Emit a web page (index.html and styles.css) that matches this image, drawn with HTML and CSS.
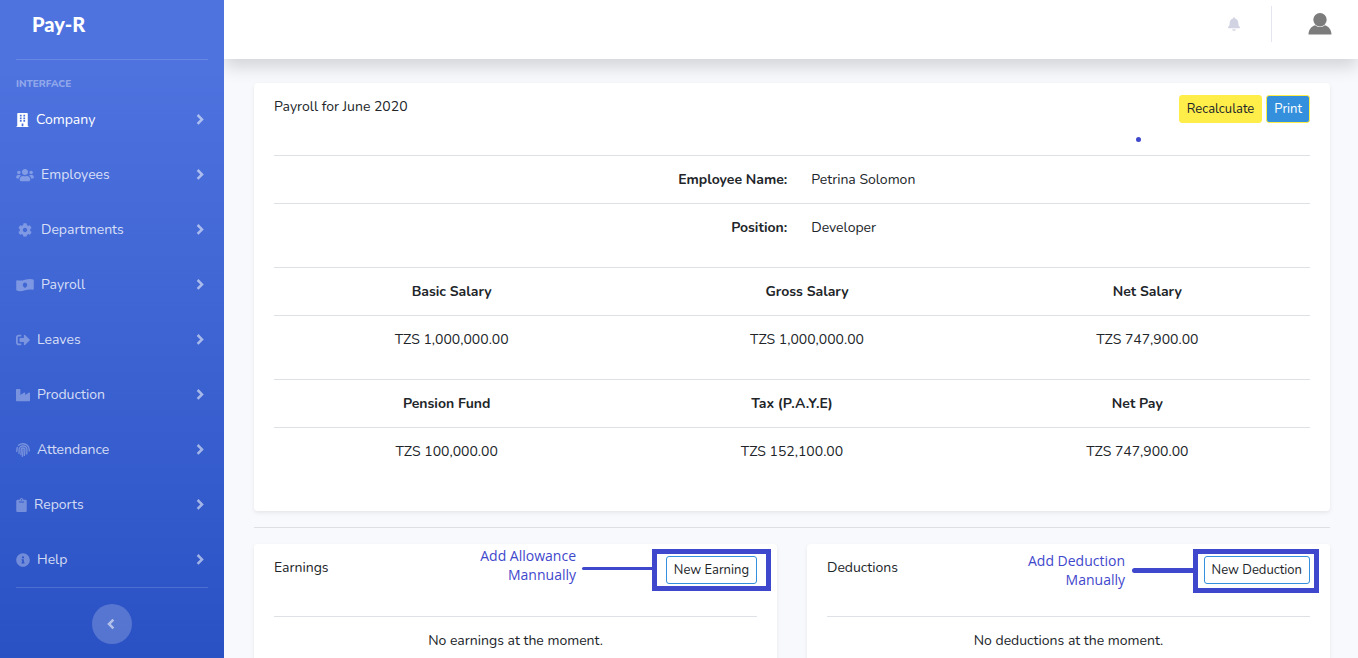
FILE: index.html
```
<!DOCTYPE html>
<html lang="en">
<head>
<meta charset="utf-8">
<meta name="viewport" content="width=device-width, initial-scale=1">
<title>Pay-R</title>
<link rel="stylesheet" href="styles.css">
</head>
<body>
<svg class="sprite" aria-hidden="true">
  <symbol id="angle" viewBox="0 0 8 12"><path d="M1.6 1 6 5.400 1.6 9.800" fill="none" stroke="currentColor" stroke-width="2.500"/></symbol>
</svg>
<div class="app">
  <nav class="sidebar">
    <a class="brand" href="#">Pay-R</a>
    <div class="side-heading">INTERFACE</div>
    <ul class="menu">
      <li><a class="item active" href="#"><svg class="icon w12" viewBox="0 0 448 512"><path fill-rule="evenodd" d="M436 480h-20V24c0-13-11-24-24-24H56C43 0 32 11 32 24v456H12c-7 0-12 5-12 12v20h448v-20c0-7-5-12-12-12zM128 64h64v64h-64zM256 64h64v64h-64zM128 160h64v64h-64zM256 160h64v64h-64zM128 256h64v64h-64zM256 256h64v64h-64zM192 384h64v96h-64z"/></svg><span>Company</span><svg class="angle"><use href="#angle"/></svg></a></li>
      <li><a class="item" href="#"><svg class="icon w18" viewBox="0 0 640 512"><path d="M96 224c35.3 0 64-28.7 64-64s-28.7-64-64-64-64 28.7-64 64 28.7 64 64 64zm448 0c35.3 0 64-28.7 64-64s-28.7-64-64-64-64 28.7-64 64 28.7 64 64 64zm32 32h-64c-17.6 0-33.5 7.1-45.1 18.6 40.3 22.1 68.9 62 75.1 109.400h66c17.7 0 32-14.3 32-32v-32c0-35.3-28.7-64-64-64zm-256 0c61.9 0 112-50.1 112-112S381.9 32 320 32 208 82.1 208 144s50.1 112 112 112zm76.8 32h-8.3c-20.8 10-43.9 16-68.5 16s-47.6-6-68.5-16h-8.3C179.6 288 128 339.6 128 403.2V432c0 26.5 21.5 48 48 48h288c26.5 0 48-21.5 48-48v-28.8c0-63.6-51.6-115.2-115.2-115.2zm-223.7-13.4C161.5 263.1 145.6 256 128 256H64c-35.3 0-64 28.7-64 64v32c0 17.7 14.3 32 32 32h65.9c6.3-47.4 34.9-87.3 75.2-109.4z"/></svg><span>Employees</span><svg class="angle"><use href="#angle"/></svg></a></li>
      <li><a class="item" href="#"><svg class="icon w18" viewBox="0 0 512 512"><path d="M487.4 315.7l-42.6-24.6c4.3-23.2 4.3-47 0-70.2l42.6-24.6c4.9-2.8 7.1-8.6 5.5-14-11.1-35.6-30-67.8-54.7-94.6-3.8-4.1-10-5.1-14.8-2.3L380.8 110c-17.9-15.4-38.5-27.3-60.8-35.1V25.8c0-5.6-3.9-10.5-9.4-11.7-36.7-8.2-74.3-7.8-109.2 0-5.5 1.2-9.4 6.1-9.4 11.7V75c-22.2 7.9-42.8 19.8-60.8 35.1L88.7 85.5c-4.9-2.8-11-1.9-14.8 2.3-24.7 26.7-43.6 58.9-54.7 94.6-1.7 5.4.6 11.2 5.5 14L67.3 221c-4.3 23.2-4.3 47 0 70.2l-42.6 24.6c-4.9 2.8-7.1 8.6-5.5 14 11.1 35.6 30 67.8 54.7 94.6 3.8 4.1 10 5.1 14.8 2.3l42.6-24.6c17.9 15.4 38.5 27.3 60.8 35.1v49.2c0 5.6 3.9 10.5 9.4 11.7 36.7 8.2 74.3 7.8 109.2 0 5.5-1.2 9.400-6.1 9.400-11.7v-49.2c22.2-7.9 42.8-19.8 60.8-35.1l42.6 24.6c4.9 2.8 11 1.9 14.8-2.3 24.7-26.7 43.6-58.9 54.7-94.6 1.5-5.5-.7-11.3-5.6-14.1zM256 336c-44.1 0-80-35.9-80-80s35.9-80 80-80 80 35.9 80 80-35.9 80-80 80z"/></svg><span>Departments</span><svg class="angle"><use href="#angle"/></svg></a></li>
      <li><a class="item" href="#"><svg class="icon w18" viewBox="0 0 640 512"><path d="M621 54C582 38 544 32 505 32c-123 0-247 62-370 62-31 0-62-4-92-13C20 74 0 90 0 111v317c0 13 7 25 19 30 39 16 77 22 116 22 123 0 247-62 370-62 31 0 62 4 92 13 23 7 43-9 43-30V84c0-13-7-25-19-30zM320 352c-44 0-80-43-80-96s36-96 80-96 80 43 80 96-36 96-80 96z"/></svg><span>Payroll</span><svg class="angle"><use href="#angle"/></svg></a></li>
      <li><a class="item" href="#"><svg class="icon w14" viewBox="0 0 512 512"><path d="M497 273L329 441c-15 15-41 4.500-41-17v-96H152c-13.300 0-24-10.700-24-24v-96c0-13.300 10.700-24 24-24h136V88c0-21.400 25.900-32 41-17l168 168c9.300 9.400 9.300 24.600 0 34zM192 436v-40c0-6.600-5.400-12-12-12H96c-17.700 0-32-14.300-32-32V160c0-17.700 14.300-32 32-32h84c6.600 0 12-5.400 12-12V76c0-6.600-5.400-12-12-12H96c-53 0-96 43-96 96v192c0 53 43 96 96 96h84c6.600 0 12-5.400 12-12z"/></svg><span>Leaves</span><svg class="angle"><use href="#angle"/></svg></a></li>
      <li><a class="item" href="#"><svg class="icon w14" viewBox="0 0 512 512"><path d="M475 164L336 252v-68c0-19-21-30-37-20L160 252V56c0-13-11-24-24-24H24C11 32 0 43 0 56v400c0 13 11 24 24 24h464c13 0 24-11 24-24V184c0-19-21-30-37-20z"/></svg><span>Production</span><svg class="angle"><use href="#angle"/></svg></a></li>
      <li><a class="item" href="#"><svg class="icon w14" viewBox="0 0 512 512"><g fill="none" stroke="currentColor" stroke-width="50" stroke-linecap="round"><path d="M256 246c2 90-6 160-26 240M178 420c12-60 14-110 12-172 0-38 28-66 66-66s68 30 68 68c2 76-4 140-18 202M108 374c8-44 8-84 6-124 0-80 62-142 142-142s142 62 144 142c0 54 0 96-8 146M30 306c8-60-4-90 18-146M92 86C180 6 330 6 420 90c50 50 72 110 66 200"/></g></svg><span>Attendance</span><svg class="angle"><use href="#angle"/></svg></a></li>
      <li><a class="item" href="#"><svg class="icon w11" viewBox="0 0 384 512"><path fill-rule="evenodd" d="M384 112v352c0 26.500-21.500 48-48 48H48c-26.500 0-48-21.500-48-48V112c0-26.500 21.500-48 48-48h80c0-35.300 28.700-64 64-64s64 28.700 64 64h80c26.500 0 48 21.500 48 48zM192 40c-13.300 0-24 10.700-24 24s10.700 24 24 24 24-10.700 24-24-10.700-24-24-24m96 114v-20a6 6 0 0 0-6-6H102a6 6 0 0 0-6 6v20a6 6 0 0 0 6 6h180a6 6 0 0 0 6-6z"/></svg><span>Reports</span><svg class="angle"><use href="#angle"/></svg></a></li>
      <li><a class="item" href="#"><svg class="icon w14" viewBox="0 0 512 512"><path fill-rule="evenodd" d="M256 8C119 8 8 119 8 256s111 248 248 248 248-111 248-248S393 8 256 8zm0 110a42 42 0 1 1 0 84 42 42 0 0 1 0-84zm56 254c0 6.600-5.400 12-12 12h-88c-6.600 0-12-5.400-12-12v-24c0-6.600 5.400-12 12-12h12v-64h-12c-6.600 0-12-5.400-12-12v-24c0-6.600 5.400-12 12-12h64c6.600 0 12 5.400 12 12v100h12c6.600 0 12 5.400 12 12v24z"/></svg><span>Help</span><svg class="angle"><use href="#angle"/></svg></a></li>
    </ul>
    <button class="toggle" type="button" aria-label="Collapse sidebar"><svg viewBox="0 0 8 12"><path d="M6.400 1.600 2 6l4.400 4.400" fill="none" stroke="currentColor" stroke-width="2.500"/></svg></button>
  </nav>

  <div class="page">
    <header class="topbar">
      <button class="top-btn bell" type="button" aria-label="Notifications"><svg viewBox="0 0 448 512"><path d="M224 512c35.300 0 64-28.700 64-64H160c0 35.300 28.700 64 64 64zm215.400-149.700c-19.300-20.800-55.500-52-55.500-154.300 0-77.700-54.500-139.900-127.900-155.200V32c0-17.700-14.300-32-32-32s-32 14.300-32 32v20.800C118.600 68.100 64.100 130.300 64.100 208c0 102.300-36.200 133.500-55.500 154.300-6 6.400-8.600 14.200-8.600 21.700.1 16.400 13 32 32.100 32h383.800c19.100 0 32-15.600 32.100-32 0-7.500-2.600-15.300-8.500-21.700z"/></svg></button>
      <button class="top-btn user" type="button" aria-label="Account"><svg viewBox="0 0 24 22"><path d="M.5 21.500c0-5 3-8.200 6.600-9.300a8 8 0 0 0 9.800 0c3.600 1.100 6.600 4.300 6.600 9.300z" fill="#7c7c7c"/><circle cx="12" cy="6.700" r="6.700" fill="#7c7c7c"/></svg></button>
    </header>

    <main class="content">
      <section class="card payroll">
        <div class="card-head">
          <h1>Payroll for June 2020</h1>
          <div class="actions">
            <button class="btn yellow" type="button">Recalculate</button>
            <button class="btn blue" type="button">Print</button>
          </div>
          <span class="dot"></span>
        </div>
        <table class="details">
          <tr><th scope="row">Employee Name:</th><td>Petrina Solomon</td></tr>
          <tr><th scope="row">Position:</th><td>Developer</td></tr>
        </table>
        <table class="figures salary">
          <thead><tr><th>Basic Salary</th><th>Gross Salary</th><th>Net Salary</th></tr></thead>
          <tbody><tr><td>TZS 1,000,000.00</td><td>TZS 1,000,000.00</td><td>TZS 747,900.00</td></tr></tbody>
        </table>
        <table class="figures">
          <thead><tr><th>Pension Fund</th><th>Tax (P.A.Y.E)</th><th>Net Pay</th></tr></thead>
          <tbody><tr><td>TZS 100,000.00</td><td>TZS 152,100.00</td><td>TZS 747,900.00</td></tr></tbody>
        </table>
      </section>
      <hr class="rule">
      <div class="pair">
        <section class="card">
          <div class="card-head">
            <h2>Earnings</h2>
            <div class="actions marked">
              <button class="btn outline" type="button">New Earning</button>
              <div class="frame earning"></div>
              <div class="line earning"></div>
              <div class="note earning">Add Allowance<br>Mannually</div>
            </div>
          </div>
          <table class="figures"><tr><td>No earnings at the moment.</td></tr></table>
        </section>
        <section class="card">
          <div class="card-head">
            <h2>Deductions</h2>
            <div class="actions marked">
              <button class="btn outline" type="button">New Deduction</button>
              <div class="frame deduction"></div>
              <div class="line deduction"></div>
              <div class="note deduction">Add Deduction<br>Manually</div>
            </div>
          </div>
          <table class="figures"><tr><td>No deductions at the moment.</td></tr></table>
        </section>
      </div>
    </main>
  </div>
</div>
</body>
</html>
```
FILE: styles.css
```
* { box-sizing: border-box; }
body {
  margin: 0;
  background: #f8f9fc;
  color: #212529;
  font: 400 14px/24px Nunito, "Open Sans", "Noto Sans", sans-serif;
}
button { font: inherit; cursor: pointer; }
.sprite { position: absolute; width: 0; height: 0; }
.app { display: flex; height: 100vh; overflow: hidden; }

/* Sidebar */
.sidebar {
  z-index: 2;
  flex: 0 0 224px;
  display: flex;
  flex-direction: column;
  padding: 0 16px;
  background: linear-gradient(180deg, #4e73df 10%, #224abe 120%);
  color: #fff;
}
.brand {
  height: 60px;
  padding: 12px 16px;
  border-bottom: 1px solid rgba(255, 255, 255, .15);
  color: #fff;
  font: 900 20px/24px "Bauhaus 93", Lato, sans-serif;
  text-decoration: none;
}
.side-heading {
  padding-top: 16px;
  color: rgba(255, 255, 255, .4);
  font-size: 10px;
  font-weight: 800;
  line-height: 16px;
}
.menu {
  margin: 0;
  padding: 0;
  list-style: none;
  border-bottom: 1px solid rgba(255, 255, 255, .15);
}
.item {
  display: flex;
  align-items: center;
  gap: 7px;
  height: 55px;
  color: rgba(255, 255, 255, .8);
  text-decoration: none;
}
.item span { flex: 1; }
.item.active { color: #fff; }
.icon { height: 14px; flex: none; fill: currentColor; opacity: .4; }
.active .icon { opacity: 1; }
.w11 { width: 11px; }
.w12 { width: 13px; }
.w14 { width: 14px; }
.w18 { width: 18px; }
.angle { width: 8px; height: 12px; margin-right: 4px; color: rgba(255, 255, 255, .55); }
.toggle {
  display: grid;
  place-items: center;
  align-self: center;
  width: 40px;
  height: 40px;
  margin-top: 16px;
  padding: 0 2px 0 0;
  border: 0;
  border-radius: 50%;
  background: rgba(255, 255, 255, .2);
  color: rgba(255, 255, 255, .55);
}
.toggle svg { width: 8px; height: 12px; }

/* Top bar */
.page { flex: 1; min-width: 0; display: flex; flex-direction: column; }
.topbar {
  z-index: 1;
  flex: 0 0 59px;
  display: flex;
  justify-content: flex-end;
  padding: 6px 26px 17px 0;
  background: #fff;
  box-shadow: 0 8px 16px rgba(0, 0, 0, .15);
}
.top-btn { display: grid; place-items: center; border: 0; background: none; }
.bell { padding: 0 31px; border-right: 1px solid #e3e6f0; }
.bell svg { width: 12px; height: 14px; fill: #d1d3e2; }
.user { padding: 0 0 0 36px; }
.user svg { width: 24px; height: 22px; }

/* Content */
.content {
  flex: 1;
  min-height: 0;
  overflow-y: auto;
  scrollbar-width: none;
  padding: 24px 28px 24px 30px;
}
.card {
  padding: 12px 20px 4px;
  border-radius: 4px;
  background: #fff;
  box-shadow: 0 2px 4px rgba(0, 0, 0, .075);
}
.payroll { padding-bottom: 20px; }
.card-head {
  position: relative;
  display: flex;
  justify-content: space-between;
  align-items: flex-start;
  margin-bottom: 32px;
}
h1, h2 { margin: 0; font-size: 14px; font-weight: 400; line-height: 24px; }
.actions { display: flex; gap: 4px; }
.btn {
  height: 28px;
  padding: 0 7px;
  border: 1px solid #ffed4a;
  border-radius: 3px;
  font-size: 13px;
  line-height: 20px;
}
.yellow { background: #ffed4a; color: #212529; }
.blue { background: #3490dc; color: #fff; }
.outline { border-color: #3490dc; background: #fff; color: #212529; }
table {
  width: 100%;
  margin-bottom: 16px;
  border-collapse: separate;
  border-spacing: 0;
  table-layout: fixed;
}
th, td { height: 48px; padding: 0 12px; border-top: 1px solid #dee2e6; }
th { font-weight: 700; }
.details th { width: 50.7%; text-align: right; }
.figures td, .figures th { text-align: center; }
.salary th:nth-child(-n+2) { width: 34.3%; }
.rule { height: 1px; margin: 16px 0; border: 0; background: #dddfe4; }
.pair { display: grid; grid-template-columns: 1fr 1fr; gap: 30px; }

/* Annotations lying over the cards */
.dot {
  position: absolute;
  top: 42px;
  right: 169px;
  width: 5px;
  height: 5px;
  border-radius: 50%;
  background: #3f48cc;
}
.marked { position: relative; }
.frame { position: absolute; border: 5px solid #3f48cc; pointer-events: none; }
.frame.earning { inset: -7px -14px; }
.frame.deduction { inset: -7px -9px -9px -11px; }
.line { position: absolute; background: #3f48cc; border-radius: 3px 0 0 3px; }
.line.earning { top: 11px; right: 104px; width: 71px; height: 3px; }
.line.deduction { top: 12px; right: 115px; width: 63px; height: 5px; }
.note {
  position: absolute;
  color: #3f48cc;
  font: 400 14px/19px "Segoe UI", "Open Sans", sans-serif;
  text-align: right;
  white-space: nowrap;
}
.note.earning { top: -10px; right: 181px; }
.note.deduction { top: -5px; right: 185px; }
```
